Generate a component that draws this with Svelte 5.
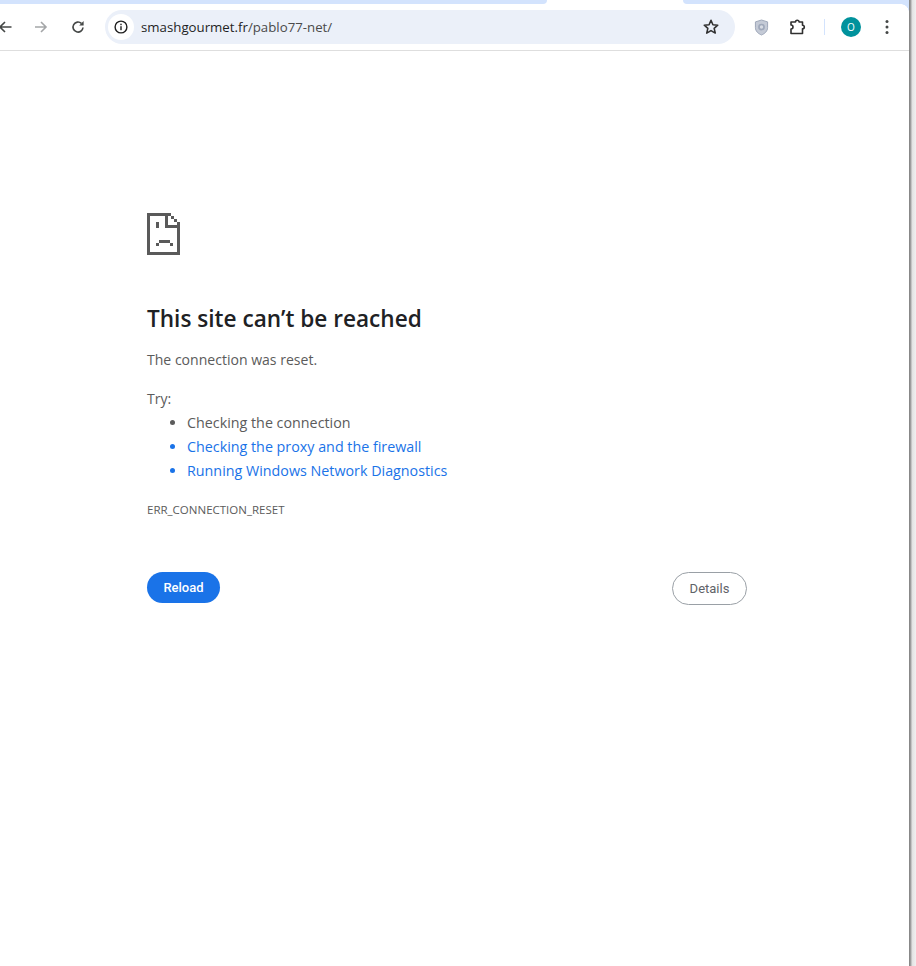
<script>
  const tries = [
    { text: 'Checking the connection' },
    { text: 'Checking the proxy and the firewall', link: true },
    { text: 'Running Windows Network Diagnostics', link: true }
  ];
</script>

<div class="desktop">
  <div class="window">
    <div class="tabstrip">
      <div class="tab-left"></div>
      <div class="tab-active"></div>
      <div class="tab-right"></div>
    </div>
    <header class="toolbar">
      <svg class="nav back" viewBox="0 0 16 16" width="16" height="16"><path d="M14.500 8H3M8 3 3 8l5 5" fill="none" stroke="#444746" stroke-width="1.6"/></svg>
      <svg class="nav forward" viewBox="0 0 16 16" width="16" height="16"><path d="M2 8h11M8 3l5 5-5 5" fill="none" stroke="#a4a6a8" stroke-width="1.6"/></svg>
      <svg class="nav reload" viewBox="0 0 16 16" width="16" height="16"><path d="M13 8.500A5 5 0 1 1 11.400 4.400" fill="none" stroke="#444746" stroke-width="1.6"/><path d="M13.600 2v4.400H9.200z" fill="#444746"/></svg>
      <div class="omnibox">
        <span class="info">
          <svg viewBox="0 0 16 16" width="16" height="16"><circle cx="8" cy="8" r="5.900" fill="none" stroke="#1f1f1f" stroke-width="1.400"/><rect x="7.300" y="7.200" width="1.400" height="4" fill="#1f1f1f"/><rect x="7.300" y="4.700" width="1.400" height="1.500" fill="#1f1f1f"/></svg>
        </span>
        <span class="url"><span class="host">smashgourmet.fr</span>/pablo77-net/</span>
        <svg class="star" viewBox="0 0 16 16" width="18" height="18"><path d="M8 2l1.700 4 4.300.4-3.200 2.800 1 4.200L8 11.200l-3.800 2.200 1-4.200L2 6.400 6.300 6z" fill="none" stroke="#303030" stroke-width="1.400" stroke-linejoin="round"/></svg>
      </div>
      <svg class="shield" viewBox="0 0 16 18" width="15" height="17"><path d="M8 1l6.500 2v6c0 4-3 6.500-6.500 8C4.500 15.500 1.500 13 1.500 9V3z" fill="#c4cad6" stroke="#9aa3b5" stroke-width="1"/><circle cx="8" cy="8.500" r="3.600" fill="#9fa8ba"/><circle cx="8" cy="8.500" r="1.800" fill="#d7dbe3"/></svg>
      <svg class="puzzle" viewBox="0 0 18 18" width="18" height="18"><path d="M3 4H7.500a1.800 1.800 0 0 1 3.600 0H14.500V7.200a1.800 1.800 0 0 1 0 3.600V15.500H3V11a2 2 0 0 0 0-4z" fill="none" stroke="#303030" stroke-width="1.600" stroke-linejoin="round"/></svg>
      <span class="divider"></span>
      <span class="avatar">O</span>
      <svg class="menu" viewBox="0 0 4 16" width="4" height="16"><circle cx="2" cy="2.500" r="1.500" fill="#444746"/><circle cx="2" cy="8" r="1.500" fill="#444746"/><circle cx="2" cy="13.500" r="1.500" fill="#444746"/></svg>
    </header>

    <main class="page">
      <div class="column">
        <svg class="sad" viewBox="0 0 33 42" width="33" height="42" shape-rendering="crispEdges" fill="#5a5a5a">
          <path d="M0 0h21v3H3v36h27V15h3v27H0z"/>
          <path d="M18 0h3v12h12v3H18z"/>
          <path d="M21 0h3v3h3v3h3v3h3v6h-3V9h-3V6h-3V3h-3z"/>
          <rect x="9" y="9" width="3" height="6"/>
          <rect x="12" y="27" width="11" height="3"/>
          <rect x="9" y="30" width="3" height="3"/>
          <rect x="23" y="30" width="3" height="3"/>
        </svg>
        <h1>This site can’t be reached</h1>
        <p class="reason">The connection was reset.</p>
        <p class="try">Try:</p>
        <ul>
          {#each tries as t}
            <li class:link={t.link}>{t.text}</li>
          {/each}
        </ul>
        <p class="code">ERR_CONNECTION_RESET</p>
        <div class="actions">
          <button class="primary">Reload</button>
          <button class="secondary">Details</button>
        </div>
      </div>
    </main>
  </div>
  <div class="edge"></div>
</div>

<style>
  :global(body) { margin: 0; background: #fff; }
  .desktop { display: flex; width: 916px; height: 966px; overflow: hidden; }
  .window {
    width: 909px;
    flex: none;
    font-family: "Open Sans", "Noto Sans", sans-serif;
    background: #fff;
    overflow: hidden;
  }
  .edge {
    flex: 1;
    background: linear-gradient(90deg, #7d7d7d 0, #a8a8a8 2px, #e2e2e2 3px, #f0f0f0 100%);
  }
  .tabstrip { height: 4px; display: flex; background: #fff; }
  .tab-left { width: 547px; background: #d3e3fd; border-bottom-right-radius: 8px; }
  .tab-active { width: 136px; }
  .tab-right { flex: 1; background: #d3e3fd; border-bottom-left-radius: 8px; }
  .toolbar {
    height: 47px;
    box-sizing: border-box;
    border-bottom: 1px solid #dedede;
    display: flex;
    align-items: center;
    position: relative;
  }
  .toolbar::after {
    content: "";
    position: absolute;
    top: 0;
    right: 0;
    width: 8px;
    height: 8px;
    background: radial-gradient(circle at 0 100%, transparent 7.500px, #d3e3fd 8px);
  }
  .nav { flex: none; }
  .back { margin-left: -3px; }
  .forward { margin-left: 20px; }
  .reload { margin-left: 21px; }
  .omnibox {
    margin-left: 19px;
    width: 630px;
    height: 34px;
    border-radius: 17px;
    background: #ebf0f9;
    display: flex;
    align-items: center;
    flex: none;
  }
  .info {
    width: 26px;
    height: 26px;
    margin-left: 3px;
    border-radius: 50%;
    background: #fff;
    display: flex;
    align-items: center;
    justify-content: center;
  }
  .url {
    margin-left: 7px;
    font-size: 13.250px;
    color: #4a4a4a;
    flex: 1;
  }
  .host { color: #1f1f1f; }
  .star { margin-right: 15px; }
  .shield { margin-left: 19px; }
  .puzzle { margin-left: 19px; }
  .divider { width: 1px; height: 16px; background: #d3e3fd; margin-left: 18px; }
  .avatar {
    width: 20px;
    height: 20px;
    margin-left: 16px;
    border-radius: 50%;
    background: #00929c;
    color: #fff;
    font-size: 10px;
    line-height: 20px;
    text-align: center;
  }
  .menu { margin-left: 24px; }
  .page { padding-left: 147px; }
  .column { width: 600px; padding-top: 162px; color: #5b5b5b; font-size: 14.300px; }
  .sad { display: block; }
  h1 {
    margin: 49px 0 0;
    font-size: 22.600px;
    line-height: 30px;
    font-weight: 600;
    color: #202124;
  }
  .reason { margin: 16px 0 0; line-height: 20px; font-size: 14.050px; }
  .try { margin: 19px 0 0; line-height: 20px; font-size: 14.050px; }
  ul { margin: 2px 0 0; padding: 0 0 0 40px; }
  li { line-height: 24px; }
  li.link { color: #1a73e8; }
  .code { margin: 19px 0 0; font-size: 11.500px; line-height: 16px; }
  .actions {
    margin-top: 54px;
    display: flex;
    justify-content: space-between;
    align-items: flex-start;
  }
  button { font-family: Roboto, sans-serif; font-size: 13px; font-weight: 500; border-radius: 17px; padding: 0; }
  .primary { width: 73px; height: 31px; background: #1a73e8; color: #fff; border: none; }
  .secondary { width: 75px; height: 33px; background: #fff; color: #5f6368; border: 1px solid #9aa0a6; font-weight: 400; }
</style>
